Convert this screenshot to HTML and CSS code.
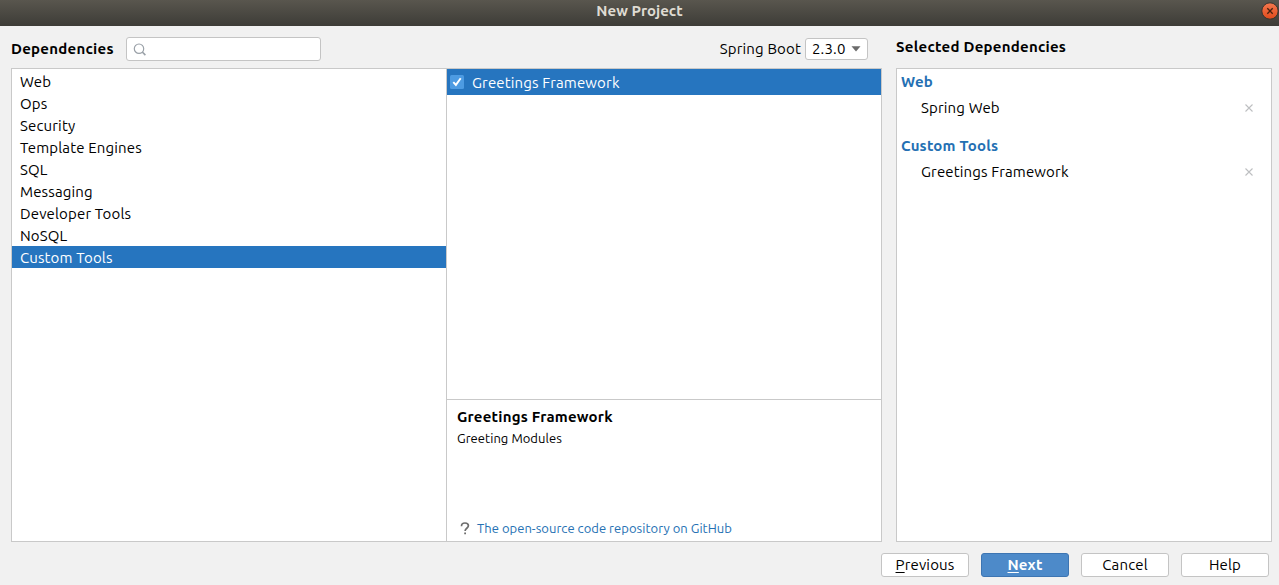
FILE: index.html
```html
<!DOCTYPE html>
<html lang="en">
<head>
<meta charset="utf-8">
<title>New Project</title>
<link rel="stylesheet" href="styles.css">
</head>
<body>
<div class="window">
  <header class="titlebar">
    <span class="window-title">New Project</span>
    <svg class="close" width="18" height="18" viewBox="0 0 18 18">
      <defs><linearGradient id="closeFill" x1="0" y1="0" x2="0" y2="1"><stop offset="0" stop-color="#f4784f"/><stop offset="1" stop-color="#df4a1b"/></linearGradient></defs>
      <circle cx="9" cy="9" r="8.2" fill="url(#closeFill)" stroke="#35332e" stroke-width="1"/>
      <path d="M6.3 6.3l5.4 5.4M11.7 6.3l-5.4 5.4" stroke="#45210f" stroke-width="1.3"/>
    </svg>
  </header>
  <main class="content">
    <section class="available">
      <div class="toolbar">
        <span class="heading">Dependencies</span>
        <div class="search">
          <svg width="14" height="14" viewBox="0 0 14 14" fill="none" stroke="#9aa1a8" stroke-width="1.2"><circle cx="6" cy="5.7" r="4.7"/><path d="M9.3 9l3.1 3.1" stroke-width="1.6"/></svg>
        </div>
        <span class="boot-label">Spring Boot</span>
        <div class="select"><span>2.3.0</span><svg width="10" height="6" viewBox="0 0 10 6"><path d="M.5.3h9L5 5.6z" fill="#6b6b6b"/></svg></div>
      </div>
      <div class="panes">
        <ul class="categories">
          <li>Web</li>
          <li>Ops</li>
          <li>Security</li>
          <li>Template Engines</li>
          <li>SQL</li>
          <li>Messaging</li>
          <li>Developer Tools</li>
          <li>NoSQL</li>
          <li class="selected">Custom Tools</li>
        </ul>
        <div class="details">
          <div class="modules">
            <div class="module">
              <svg width="14" height="14" viewBox="0 0 14 14"><rect width="14" height="14" rx="1.5" fill="#4d9be2"/><path d="M3.3 7.1l2.6 2.8 4.8-6.6" fill="none" stroke="#fff" stroke-width="1.9"/></svg>
              <span>Greetings Framework</span>
            </div>
          </div>
          <div class="description">
            <h2>Greetings Framework</h2>
            <p>Greeting Modules</p>
            <div class="reference">
              <svg width="10" height="14" viewBox="0 0 10 14"><path d="M1.5 5.2C1.5 3 3 2 5 2s3.4 1 3.4 2.8c0 2.3-3.3 2.6-3.3 5.1" fill="none" stroke="#6e6e6e" stroke-width="1.7"/><path d="M4.2 11.5h1.8v1.8H4.2z" fill="#6e6e6e"/></svg>
              <a>The open-source code repository on GitHub</a>
            </div>
          </div>
        </div>
      </div>
    </section>
    <section class="chosen">
      <div class="chosen-title">Selected Dependencies</div>
      <div class="chosen-list">
        <h3>Web</h3>
        <div class="item"><span>Spring Web</span><svg width="8" height="8" viewBox="0 0 8 8"><path d="M.5.5l7 7M7.5.5l-7 7" stroke="#bdbfc1" stroke-width="1.1"/></svg></div>
        <h3>Custom Tools</h3>
        <div class="item"><span>Greetings Framework</span><svg width="8" height="8" viewBox="0 0 8 8"><path d="M.5.5l7 7M7.5.5l-7 7" stroke="#bdbfc1" stroke-width="1.1"/></svg></div>
      </div>
    </section>
  </main>
  <footer class="actions">
    <button class="button"><span><u>P</u>revious</span></button>
    <button class="button primary"><span><u>N</u>ext</span></button>
    <button class="button"><span>Cancel</span></button>
    <button class="button"><span>Help</span></button>
  </footer>
</div>
</body>
</html>
```
FILE: styles.css
```css
* { box-sizing: border-box; }
body { margin: 0; }
.window {
  width: 1279px; height: 585px; display: flex; flex-direction: column; overflow: hidden;
  background: #f1f1f1; color: #000;
  font: 15px/22px Ubuntu, "Noto Sans", sans-serif; letter-spacing: .15px;
}
svg { display: block; flex: none; }
.titlebar {
  height: 26px; flex: none; position: relative; display: flex; justify-content: center;
  background: linear-gradient(#59564e, #3d3c37);
}
.window-title { color: #dfdbd2; font-weight: 700; font-size: 15px; line-height: 22px; letter-spacing: 0; }
.close { position: absolute; right: 0; top: 2px; }
.content { height: 516px; flex: none; display: flex; gap: 14px; padding: 0 7px 0 11px; }
.available { width: 871px; }
.toolbar { height: 42px; padding: 11px 14px 0 0; display: flex; }
.heading, .chosen-title { font-weight: 700; letter-spacing: .26px; }
.heading { width: 115px; line-height: 24px; }
.search {
  width: 195px; height: 24px; padding: 5px 6px; border: 1px solid #c4c4c4; border-radius: 3px; background: #fff;
}
.boot-label { margin-left: auto; line-height: 24px; }
.select {
  width: 63px; height: 22px; margin: 1px 0 0 4px; padding: 0 6px; border: 1px solid #c4c4c4; border-radius: 3px;
  background: #fff; display: flex; align-items: center; justify-content: space-between; line-height: 20px;
}
.panes { height: 474px; display: flex; border: 1px solid #c9c9c9; background: #fff; }
.categories { width: 434px; margin: 0; padding: 1px 0 0; list-style: none; }
.categories li { height: 22px; padding-left: 8px; line-height: 24px; }
.categories .selected { background: #2675bf; color: #fff; }
.details { width: 435px; border-left: 1px solid #c9c9c9; display: flex; flex-direction: column; }
.modules { height: 330px; }
.module { height: 26px; padding-left: 3px; display: flex; align-items: center; gap: 8px; background: #2675bf; color: #fff; }
.module span { line-height: 22px; padding-top: 2px; }
.description { flex: 1; border-top: 1px solid #c9c9c9; padding: 6px 10px 2px; display: flex; flex-direction: column; }
h2, h3, p { margin: 0; font-size: 15px; line-height: 22px; letter-spacing: .22px; }
.description p { font-size: 13px; line-height: 20px; letter-spacing: .04px; }
.reference { margin-top: auto; padding-left: 3px; display: flex; align-items: center; gap: 7px; font-size: 13px; line-height: 22px; letter-spacing: .03px; color: #2470b3; }
.chosen { width: 376px; }
.chosen-title { height: 42px; padding-top: 10px; }
.chosen-list { height: 474px; padding: 2px 18px 0 4px; border: 1px solid #c9c9c9; background: #fff; }
h3 { color: #2470b3; }
.item { height: 30px; margin-bottom: 12px; padding-left: 20px; display: flex; align-items: center; justify-content: space-between; }
.actions { display: flex; gap: 12px; justify-content: flex-end; padding: 11px 10px 0 0; }
.button {
  width: 88px; height: 24px; padding: 0 0 1px; border: 1px solid #c4c4c4; border-radius: 3px; background: #fff; color: #000;
  font: inherit; line-height: 20px; letter-spacing: inherit;
}
.button u { text-underline-offset: 2px; text-decoration-thickness: 1px; }
.primary { background: #4d8ac9; border-color: #3d75b2; color: #fff; font-weight: 700; }
```
